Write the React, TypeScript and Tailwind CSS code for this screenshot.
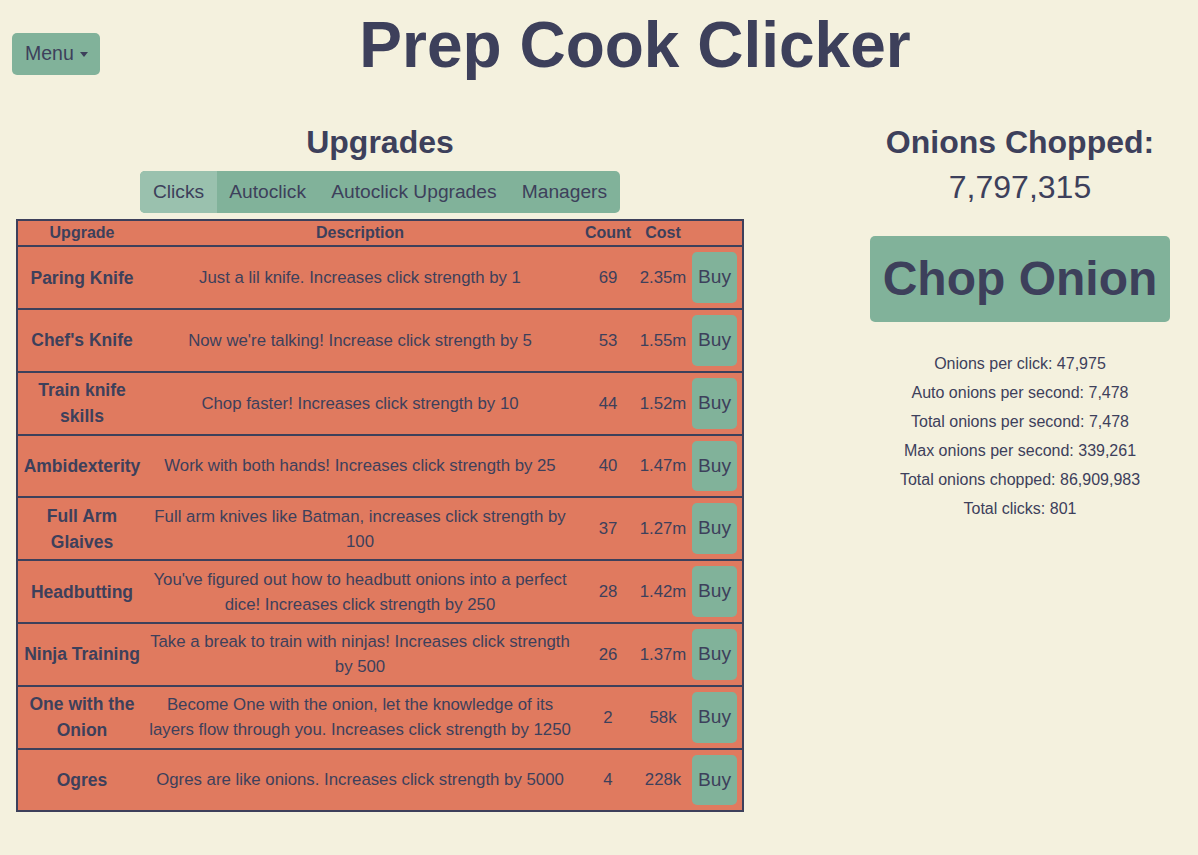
import React from "react";

const rows = [
  { name: "Paring Knife", desc: "Just a lil knife. Increases click strength by 1", count: "69", cost: "2.35m" },
  { name: "Chef's Knife", desc: "Now we're talking! Increase click strength by 5", count: "53", cost: "1.55m" },
  { name: "Train knife skills", desc: "Chop faster! Increases click strength by 10", count: "44", cost: "1.52m" },
  { name: "Ambidexterity", desc: "Work with both hands! Increases click strength by 25", count: "40", cost: "1.47m" },
  { name: "Full Arm Glaives", desc: "Full arm knives like Batman, increases click strength by 100", count: "37", cost: "1.27m" },
  { name: "Headbutting", desc: "You've figured out how to headbutt onions into a perfect dice! Increases click strength by 250", count: "28", cost: "1.42m" },
  { name: "Ninja Training", desc: "Take a break to train with ninjas! Increases click strength by 500", count: "26", cost: "1.37m" },
  { name: "One with the Onion", desc: "Become One with the onion, let the knowledge of its layers flow through you. Increases click strength by 1250", count: "2", cost: "58k" },
  { name: "Ogres", desc: "Ogres are like onions. Increases click strength by 5000", count: "4", cost: "228k" },
];

const stats = [
  "Onions per click: 47,975",
  "Auto onions per second: 7,478",
  "Total onions per second: 7,478",
  "Max onions per second: 339,261",
  "Total onions chopped: 86,909,983",
  "Total clicks: 801",
];

const tabs = ["Clicks", "Autoclick", "Autoclick Upgrades", "Managers"];

export default function App() {
  return (
    <div className="min-h-screen bg-[#f4f1de] text-[#3d405b] font-['Liberation_Sans',Arial,sans-serif]">
      <div className="flex items-start pl-3 pr-[28px]">
        <button className="mt-[33px] h-[42px] w-[88px] pl-[13px] rounded-[5px] bg-[#81b29a] text-[19.5px] leading-none flex items-center">
          <span>Menu</span>
          <span className="ml-[6px] mt-[1px] w-0 h-0 border-l-[4.5px] border-r-[4.5px] border-t-[5px] border-l-transparent border-r-transparent border-t-[#3d405b]" />
        </button>
        <h1 className="flex-1 text-center text-[64px] font-bold leading-[1.2] mt-[7px]">Prep Cook Clicker</h1>
      </div>

      <div className="flex mt-[39px]">
        <div className="w-[760px] flex flex-col items-center">
          <h2 className="text-[32px] font-bold leading-[1.2]">Upgrades</h2>
          <div className="mt-[10px] flex h-[42px] rounded-[5px] overflow-hidden bg-[#81b29a] text-[19.2px]">
            {tabs.map((t, i) => (
              <div
                key={t}
                className={
                  "px-[12.6px] flex items-center " + (i === 0 ? "bg-[#9ac1ae]" : "")
                }
              >
                {t}
              </div>
            ))}
          </div>
          <div className="mt-[6px] w-[728px] border-2 border-[#3d405b] bg-[#e07a5f]">
            <div className="flex h-[24px] items-center text-[16px] font-bold text-center">
              <div className="w-[128px]">Upgrade</div>
              <div className="w-[436px] pr-2">Description</div>
              <div className="w-[52px]">Count</div>
              <div className="w-[58px]">Cost</div>
              <div className="w-[50px]"></div>
            </div>
            {rows.map((r) => (
              <div key={r.name} className="flex h-[62.8px] items-center border-t-2 border-[#3d405b] text-center">
                <div className="w-[128px] px-[4px] text-[17.5px] font-bold leading-[26px]">{r.name}</div>
                <div className="w-[436px] pr-2 text-[16.8px] leading-[25px]">{r.desc}</div>
                <div className="w-[52px] text-[16.8px]">{r.count}</div>
                <div className="w-[58px] text-[16.8px]">{r.cost}</div>
                <div className="w-[50px] flex">
                  <button className="w-[45px] h-[50.7px] rounded-[5px] bg-[#81b29a] text-[19.2px]">Buy</button>
                </div>
              </div>
            ))}
          </div>
        </div>

        <div className="w-[356px] ml-[82px] flex flex-col items-center">
          <h2 className="text-[32px] font-bold leading-[1.2]">Onions Chopped:</h2>
          <div className="mt-[2px] text-[32px] leading-[1.5]">7,797,315</div>
          <button className="mt-[25px] w-[300px] h-[86px] rounded-[5px] bg-[#81b29a] text-[48px] font-bold">Chop Onion</button>
          <div className="mt-[27px] text-[16px] leading-[29px] text-center">
            {stats.map((s) => (
              <div key={s}>{s}</div>
            ))}
          </div>
        </div>
      </div>
    </div>
  );
}
